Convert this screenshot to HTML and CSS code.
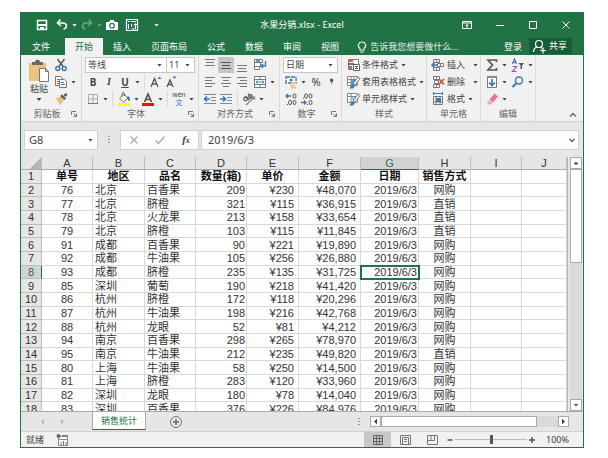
FILE: index.html
```
<!DOCTYPE html>
<html lang="zh-CN">
<head>
  <meta charset="UTF-8" />
  <meta name="viewport" content="width=device-width, initial-scale=1" />
  <title>水果分销.xlsx - Excel</title>
  <link rel="stylesheet" href="styles.css">
</head>

<body>
  <div class="window">
    <!-- TITLE BAR -->
    <header class="titlebar">
      <div class="quick">
        <button class="tool" aria-label="保存"><svg viewBox="0 0 16 16"><path fill="none" stroke="#fff" stroke-width="1.5" d="M3.5 3.5h9v9h-9z"/><path fill="#fff" d="M4 7h8v2H4zM6 10h4v3H6z"/></svg></button>
        <button class="tool drop" aria-label="撤消"><svg viewBox="0 0 16 16"><path fill="none" stroke="#fff" stroke-width="1.6" d="M6.500 2.500 3.500 6l3.500 3M4 6h5c4.500 0 4.500 5.500.5 6"/></svg></button>
        <button class="tool drop faded" aria-label="恢复"><svg viewBox="0 0 16 16"><path fill="none" stroke="#fff" stroke-width="1.4" d="M9.500 2.500 12.500 6 9 9M12 6H7c-4.500 0-4.500 5.500-.5 6"/></svg></button>
        <button class="tool" aria-label="照相机"><svg viewBox="0 0 16 16"><path fill="#fff" d="M2 5h3l1.500-2h3L11 5h3v8H2z"/><circle cx="8" cy="8.700" r="2.300" fill="none" stroke="#217346" stroke-width="1.200"/></svg></button>
        <button class="tool" aria-label="数据透视表"><svg viewBox="0 0 16 16"><path fill="none" stroke="#fff" stroke-width="1.200" d="M2.500 2.500h11v11h-11z"/><path stroke="#fff" fill="none" d="M4 4.500h2M7 4.500h5M4.500 7v5M7.500 12h4V7M7.500 7v3M9.500 8.500l2-2 2 2"/></svg></button>
        <button class="tool slim drop" aria-label="自定义快速访问工具栏"></button>
      </div>
      <h1 class="doc-name">水果分销.xlsx - Excel</h1>
      <div class="win-controls">
        <button aria-label="功能区显示选项"><svg viewBox="0 0 16 16"><path fill="none" stroke="#fff" d="M3.500 4.500h9v7h-9zM3.500 6h9M8 11V7.500M6.500 9 8 7.500 9.500 9"/></svg></button>
        <button aria-label="最小化"><svg viewBox="0 0 16 16"><path stroke="#fff" d="M4 8.500h8"/></svg></button>
        <button aria-label="最大化"><svg viewBox="0 0 16 16"><path fill="none" stroke="#fff" d="M4.500 4.500h7v7h-7z"/></svg></button>
        <button aria-label="关闭"><svg viewBox="0 0 16 16"><path stroke="#fff" d="m4.500 4.500 7 7M11.500 4.500l-7 7"/></svg></button>
      </div>
    </header>

    <!-- RIBBON TABS -->
    <nav class="tabs">
      <button class="tab file">文件</button>
      <button class="tab active">开始</button>
      <button class="tab">插入</button>
      <button class="tab">页面布局</button>
      <button class="tab">公式</button>
      <button class="tab">数据</button>
      <button class="tab">审阅</button>
      <button class="tab">视图</button>
      <button class="tell-me"><svg viewBox="0 0 16 16"><path fill="none" stroke="#e3efe8" stroke-width="1.200" d="M6 11V9.500C2.500 6.500 5 3 8 3s5.500 3.500 2 6.500V11zM6 13h4"/></svg>告诉我您想要做什么...</button>
      <button class="login">登录</button>
      <button class="share"><svg viewBox="0 0 16 16"><circle cx="8" cy="6" r="3.500" fill="none" stroke="#fff" stroke-width="1.200"/><path fill="none" stroke="#fff" stroke-width="1.200" d="M2.500 14c.2-3 1.500-4.500 3.500-5M10 9l1 1.500M9 12.500h6M12 9.500v6"/></svg>共享</button>
    </nav>

    <!-- RIBBON -->
    <div class="ribbon">
      <section class="group clipboard">
        <div class="clip-tools">
          <button class="paste">
            <svg viewBox="0 0 22 24"><path fill="#edc27c" d="M1 4h17v18H1z"/><path fill="#696969" d="M4 3h3c0-3 5-3 5 0h3v3H4z"/><path fill="#fff" stroke="#777" d="M11.500 9.500h6l3 3v10h-9z"/><path fill="none" stroke="#777" d="M17.500 9.500v3h3"/></svg>
            <span>粘贴</span>
            <i class="caret"></i>
          </button>
          <div class="rows">
            <div class="row"><button class="tool" aria-label="剪切"><svg viewBox="0 0 16 16"><path stroke="#555" stroke-width="1.400" d="m4.500 2 6 8M11.500 2l-6 8"/><g fill="none" stroke="#3a76b8" stroke-width="1.400"><circle cx="4.800" cy="11.500" r="2"/><circle cx="11.200" cy="11.500" r="2"/></g></svg></button></div>
            <div class="row"><button class="tool drop" aria-label="复制"><svg viewBox="0 0 16 16"><path fill="#fff" stroke="#777" d="M2.500 2.500h5l2 2v7h-7z"/><path fill="#fff" stroke="#777" d="M6.500 5.500h5l2 2v6h-7z"/><path stroke="#3a76b8" d="M4 5.500h2M4 7.500h2M8 8.500h3M8 10.500h4M4 9.500h2"/></svg></button></div>
            <div class="row"><button class="tool" aria-label="格式刷"><svg viewBox="0 0 16 16"><path fill="#edbd72" d="m3 7 5-1 3 3-4 5z"/><path fill="#555" d="m7 5 2-1.500 4 4L11.500 9zM10.500 4l2.500-2 1.500 1.500-2 2.500z"/></svg></button></div>
          </div>
        </div>
        <footer><span>剪贴板</span><svg class="launch" viewBox="0 0 8 8"><path fill="none" stroke="#777" d="M1.500 5V1.500H6M3.500 3.500l3 3M6.500 3.500v3h-3"/></svg></footer>
      </section>

      <section class="group font">
        <div class="rows">
          <div class="row">
            <label class="pick wide"><select aria-label="字体"><option>等线</option></select></label>
            <label class="pick small"><select aria-label="字号"><option>11</option></select></label>
          </div>
          <div class="row">
            <button class="tool letter"><b>B</b></button>
            <button class="tool letter"><i class="ital">I</i></button>
            <button class="tool letter drop"><u>U</u></button>
            <span class="sep"></span>
            <button class="tool" aria-label="增大字号"><svg viewBox="0 0 16 16"><path fill="none" stroke="#555" stroke-width="1.300" d="M3 13 6.500 4.500 10 13M4.500 10h4"/><path fill="#3a76b8" d="m9.500 5 2-2.500 2 2.500z"/></svg></button>
            <button class="tool" aria-label="减小字号"><svg viewBox="0 0 16 16"><path fill="none" stroke="#555" stroke-width="1.300" d="M3 13 6 6l3 7M4.500 10.500h3"/><path fill="#3a76b8" d="m8.500 2.500 2 2.500 2-2.500z"/></svg></button>
          </div>
          <div class="row">
            <button class="tool drop" aria-label="边框"><svg viewBox="0 0 16 16"><path fill="none" stroke="#aaa" d="M3.500 3.500h9v9h-9zM8 4v8M4 8h8"/><path stroke="#777" d="M3 12.500h10"/></svg></button>
            <span class="sep"></span>
            <button class="tool drop" aria-label="填充颜色"><svg viewBox="0 0 16 16"><path fill="#fff" stroke="#666" d="M3.500 7.500 8 3l4 4-4.500 4z"/><path fill="none" stroke="#666" d="M6 5.500V2.500c0-1.500 2.500-1.500 2.500 0V5"/><path fill="#3a76b8" d="M12 5c2 1 2.500 3 1.500 5C12 10 12 8 11 7z"/><path fill="#ff0" d="M2 12h12v3H2z"/></svg></button>
            <button class="tool drop" aria-label="字体颜色"><svg viewBox="0 0 16 16"><path fill="none" stroke="#555" stroke-width="1.700" d="m4.500 11 3.500-8 3.500 8M6 8.500h4"/><path fill="#e81010" d="M2 12h12v3H2z"/></svg></button>
            <span class="sep"></span>
            <button class="tool drop pinyin" aria-label="拼音"><span><small>wén</small><em>文</em></span></button>
          </div>
        </div>
        <footer><span>字体</span><svg class="launch" viewBox="0 0 8 8"><path fill="none" stroke="#777" d="M1.500 5V1.500H6M3.500 3.500l3 3M6.500 3.500v3h-3"/></svg></footer>
      </section>

      <section class="group align">
        <div class="rows">
          <div class="row">
            <button class="tool" aria-label="顶端对齐"><svg viewBox="0 0 16 16"><path stroke="#777" d="M3 2.500h10M4 5.500h8M3 8.500h10"/></svg></button>
            <button class="tool on" aria-label="垂直居中"><svg viewBox="0 0 16 16"><path stroke="#555" d="M3 5.500h10M4 8.500h8M3 11.500h10"/></svg></button>
            <button class="tool" aria-label="底端对齐"><svg viewBox="0 0 16 16"><path stroke="#777" d="M3 8.500h10M4 11.500h8M3 14.500h10"/></svg></button>
            <button class="tool gap" aria-label="自动换行"><svg viewBox="0 0 16 16"><path fill="#fff" stroke="#777" d="M2.500 2.500h8v3h-8zM2.500 5.500h6v4h-6zM2.500 9.500h5v3h-5z"/><path fill="none" stroke="#3a76b8" stroke-width="1.300" d="M4 4h4M13.500 4v5H9M11 7 9 9l2 2"/></svg></button>
          </div>
          <div class="row">
            <button class="tool" aria-label="左对齐"><svg viewBox="0 0 16 16"><path stroke="#777" d="M3 3.500h10M3 6.500h7M3 9.500h10M3 12.500h7"/></svg></button>
            <button class="tool" aria-label="居中"><svg viewBox="0 0 16 16"><path stroke="#777" d="M3 3.500h10M5 6.500h6M3 9.500h10M5 12.500h6"/></svg></button>
            <button class="tool" aria-label="右对齐"><svg viewBox="0 0 16 16"><path stroke="#777" d="M3 3.500h10M6 6.500h7M3 9.500h10M6 12.500h7"/></svg></button>
            <button class="tool gap drop" aria-label="合并后居中"><svg viewBox="0 0 16 16"><path fill="#fff" stroke="#777" d="M2.500 2.500h11v11h-11zM2.500 5.500h11M2.500 10.500h11M8 2.500v3M8 10.500v3"/><path fill="none" stroke="#3a76b8" d="M4 8h8M5.500 6.500 4 8l1.500 1.500M10.500 6.500 12 8l-1.500 1.500"/></svg></button>
          </div>
          <div class="row">
            <button class="tool" aria-label="减少缩进"><svg viewBox="0 0 16 16"><path stroke="#888" d="M2 3.500h12M9 6.500h5M9 9.500h5M2 12.500h12"/><path fill="none" stroke="#3a76b8" stroke-width="1.600" d="M2.500 8H8M5 5.500 2.500 8 5 10.500"/></svg></button>
            <button class="tool" aria-label="增加缩进"><svg viewBox="0 0 16 16"><path stroke="#888" d="M2 3.500h12M9 6.500h5M9 9.500h5M2 12.500h12"/><path fill="none" stroke="#3a76b8" stroke-width="1.600" d="M2 8h5.500M5 5.500 7.500 8 5 10.500"/></svg></button>
            <span class="sep"></span>
            <button class="tool drop" aria-label="方向"><svg viewBox="0 0 16 16"><g fill="none" stroke="#555" stroke-width="1.200"><circle cx="4.500" cy="8" r="1.800"/><path d="m4.500 5 3.500 4M7 2.500l4 5"/><circle cx="9.500" cy="5.500" r="1.800"/><path stroke="#888" d="m5 14 8.500-8M13.500 9V6h-3"/></g></svg></button>
          </div>
        </div>
        <footer><span>对齐方式</span><svg class="launch" viewBox="0 0 8 8"><path fill="none" stroke="#777" d="M1.500 5V1.500H6M3.500 3.500l3 3M6.500 3.500v3h-3"/></svg></footer>
      </section>

      <section class="group number">
        <div class="rows">
          <div class="row"><label class="pick"><select aria-label="数字格式"><option>日期</option></select></label></div>
          <div class="row">
            <button class="tool drop" aria-label="会计数字格式"><svg viewBox="0 0 16 16"><path fill="#fff" stroke="#3a76b8" stroke-width="1.400" stroke-dasharray="4 1" d="M3 3h10v6H3z"/><circle cx="8" cy="6" r="1.500" fill="#3a76b8"/><path fill="#edbd72" d="M8 8h5v2H8zM7 11h5v1.500H7zM8 13h5v1.500H8z"/></svg></button>
            <button class="tool percent">%</button>
            <button class="tool" aria-label="千位分隔"><svg viewBox="0 0 16 16"><path fill="#555" d="M6 5c2-1.500 4 0 3 2.500L7 11c.2-1.500.5-2 .5-3C6 8 5.500 6 6 5z"/></svg></button>
          </div>
          <div class="row">
            <button class="tool" aria-label="增加小数位数"><svg viewBox="0 0 16 16"><path fill="none" stroke="#3a76b8" stroke-width="1.300" d="M3 5h5M5 3 3 5l2 2"/><g fill="none" stroke="#555"><ellipse cx="11.500" cy="5" rx="1.500" ry="2.200"/><ellipse cx="7" cy="11.500" rx="1.500" ry="2.200"/><ellipse cx="11.500" cy="11.500" rx="1.500" ry="2.200"/><path d="M4 13.500h1"/></g></svg></button>
            <button class="tool" aria-label="减少小数位数"><svg viewBox="0 0 16 16"><path fill="none" stroke="#3a76b8" stroke-width="1.300" d="M2 11.500h5M5 9.500l2 2-2 2"/><g fill="none" stroke="#555"><ellipse cx="7" cy="5" rx="1.500" ry="2.200"/><ellipse cx="11.500" cy="5" rx="1.500" ry="2.200"/><ellipse cx="11.500" cy="11.500" rx="1.500" ry="2.200"/><path d="M4 7h1M8 13.500h1"/></g></svg></button>
          </div>
        </div>
        <footer><span>数字</span><svg class="launch" viewBox="0 0 8 8"><path fill="none" stroke="#777" d="M1.500 5V1.500H6M3.500 3.500l3 3M6.500 3.500v3h-3"/></svg></footer>
      </section>

      <section class="group styles">
        <div class="rows">
          <div class="row"><button class="text-tool"><svg viewBox="0 0 16 16"><path fill="#fff" stroke="#777" d="M3.500 2.500h10v10h-10z"/><path fill="#d9604c" d="M3 2h5v3H3zM3 9h4v3H3z"/><path fill="#3a76b8" d="M3 6h6v2H3z"/><path fill="#fff" stroke="#666" d="M8.500 7.500h6v6h-6zM10 12l3-3M10 9.500h3M10 11.500h3"/></svg>条件格式<i class="caret"></i></button></div>
          <div class="row"><button class="text-tool"><svg viewBox="0 0 16 16"><path fill="#fff" stroke="#888" d="M2.500 2.500h10v9h-10zM2.500 5.500h10M2.500 8.500h10M6 2.500v9M9 2.500v9"/><path fill="#5b9bd5" d="M6 6h6v5H6z"/><path fill="#fff" stroke="#777" d="m8 10 5-7 2 1.500-5 6.500z"/><path fill="#3a76b8" d="m7 10 3 2-2 2.500H4.500z"/></svg>套用表格格式<i class="caret"></i></button></div>
          <div class="row"><button class="text-tool"><svg viewBox="0 0 16 16"><path fill="#fff" stroke="#888" d="M2.500 2.500h10v9h-10zM2.500 5.500h10M6 2.500v9"/><path fill="#9cc3e6" d="M6 6h6v3H6z"/><path fill="#fff" stroke="#777" d="m8 10 5-7 2 1.500-5 6.500z"/><path fill="#3a76b8" d="m7 10 3 2-2 2.500H4.500z"/></svg>单元格样式<i class="caret"></i></button></div>
        </div>
        <footer><span>样式</span></footer>
      </section>

      <section class="group cells">
        <div class="rows">
          <div class="row"><button class="text-tool spread"><svg viewBox="0 0 16 16"><path fill="#fff" stroke="#777" d="M3.500 2.500h6v3h-6zM3.500 10.500h6v3h-6zM6.500 2.500v3M6.500 10.500v3M7.500 6.500h6v3h-6zM10.500 6.500v3"/><path fill="none" stroke="#3a76b8" stroke-width="1.600" d="M2 8h6M4.500 5.500 2 8l2.500 2.500"/></svg>插入<i class="caret"></i></button></div>
          <div class="row"><button class="text-tool spread"><svg viewBox="0 0 16 16"><path fill="#fff" stroke="#777" d="M3.500 2.500h6v3h-6zM3.500 10.500h6v3h-6zM6.500 2.500v3M6.500 10.500v3M4.500 6.500h4v3h-4z"/><path stroke="#d9482b" stroke-width="1.600" d="m9 5 5 5.500M14 5l-5 5.500"/></svg>删除<i class="caret"></i></button></div>
          <div class="row"><button class="text-tool"><svg viewBox="0 0 16 16"><path fill="none" stroke="#3a76b8" d="M3 2.500h10M3.500 1v3M12.500 1v3"/><path fill="#fff" stroke="#777" d="M3.500 5.500h9v8h-9zM3.500 11h9M6 5.500v8M10 5.500v8"/><path fill="#3a76b8" d="M6 7h5v4H6z"/></svg>格式<i class="caret"></i></button></div>
        </div>
        <footer><span>单元格</span></footer>
      </section>

      <section class="group editing">
        <div class="rows">
          <div class="row">
            <button class="tool drop" aria-label="求和"><svg viewBox="0 0 16 16"><path fill="none" stroke="#555" stroke-width="1.700" d="M12.500 5V3H4l4.500 5L4 13h8.500v-2"/></svg></button>
            <button class="tool drop" aria-label="排序和筛选"><svg viewBox="0 0 16 16"><path fill="none" stroke="#3a76b8" stroke-width="1.200" d="m2.500 7 2-5 2 5M3 5.500h3"/><path fill="none" stroke="#9a4fb5" stroke-width="1.200" d="M2.500 9.500h4l-4 5h4"/><path fill="#555" d="M8.500 6H14l-2 2.500V12h-1.500V8.500z"/></svg></button>
          </div>
          <div class="row">
            <button class="tool drop" aria-label="填充"><svg viewBox="0 0 16 16"><path fill="#fff" stroke="#777" d="M3.500 2.500h9v11h-9z"/><path fill="#888" d="M3 2h10v2H3z"/><path fill="none" stroke="#3a76b8" stroke-width="1.700" d="M8 5v6.500M5 8.500l3 3 3-3"/></svg></button>
            <button class="tool drop" aria-label="查找和选择"><svg viewBox="0 0 16 16"><circle cx="9" cy="6.500" r="3.500" fill="none" stroke="#3a76b8" stroke-width="1.400"/><path stroke="#3a76b8" stroke-width="2" d="m6.500 9-4 4"/></svg></button>
          </div>
          <div class="row">
            <button class="tool drop" aria-label="清除"><svg viewBox="0 0 16 16"><path fill="#e8798c" d="m5.500 8.500 5-6 3.500 3-5 6z"/><path fill="#f1a9b5" d="m5 9 3.500 3L7 13.500H4.500L3 12z"/></svg></button>
          </div>
        </div>
        <footer><span>编辑</span></footer>
      </section>
      <button class="collapse" aria-label="折叠功能区"><svg viewBox="0 0 8 8"><path fill="none" stroke="#666" stroke-width="1.300" d="m1 5.500 3-3 3 3"/></svg></button>
    </div>

    <!-- FORMULA BAR -->
    <div class="formula-bar">
      <label class="name-box"><input type="text" value="G8" aria-label="名称框"><i class="caret"></i></label>
      <svg class="dots" viewBox="0 0 4 12"><path stroke="#999" stroke-width="2" stroke-dasharray="1 2" d="M2 2v8"/></svg>
      <div class="formula-buttons">
        <button class="tool" aria-label="取消"><svg viewBox="0 0 16 16"><path stroke="#aaa" stroke-width="1.200" d="m4.500 4.500 7 7M11.500 4.500l-7 7"/></svg></button>
        <button class="tool" aria-label="输入"><svg viewBox="0 0 16 16"><path fill="none" stroke="#aaa" stroke-width="1.400" d="m3.500 8.500 3 3 6-7"/></svg></button>
        <button class="tool fx"><i>f<sub>x</sub></i></button>
      </div>
      <label class="formula"><input type="text" value="2019/6/3" aria-label="编辑栏"><svg viewBox="0 0 8 8"><path fill="none" stroke="#666" stroke-width="1.500" d="m1.500 3 2.500 2.500L6.500 3"/></svg></label>
    </div>

    <!-- SHEET -->
    <div class="sheet">
      <div class="grid">
        <table>
          <colgroup><col class="c-num"><col class="c-a"><col class="c-b"><col class="c-a"><col class="c-a"><col class="c-b"><col class="c-f"><col class="c-g"><col class="c-b"><col class="c-a"><col></colgroup>
          <thead>
            <tr><th class="corner"></th><th>A</th><th>B</th><th>C</th><th>D</th><th>E</th><th>F</th><th class="current">G</th><th>H</th><th>I</th><th>J</th></tr>
          </thead>
          <tbody>
            <tr class="titles"><th>1</th><td>单号</td><td>地区</td><td>品名</td><td>数量(箱)</td><td>单价</td><td>金额</td><td>日期</td><td>销售方式</td><td></td><td></td></tr>
            <tr><th>2</th><td>76</td><td>北京</td><td>百香果</td><td>209</td><td>¥230</td><td>¥48,070</td><td>2019/6/3</td><td>网购</td><td></td><td></td></tr>
            <tr><th>3</th><td>77</td><td>北京</td><td>脐橙</td><td>321</td><td>¥115</td><td>¥36,915</td><td>2019/6/3</td><td>直销</td><td></td><td></td></tr>
            <tr><th>4</th><td>78</td><td>北京</td><td>火龙果</td><td>213</td><td>¥158</td><td>¥33,654</td><td>2019/6/3</td><td>直销</td><td></td><td></td></tr>
            <tr><th>5</th><td>79</td><td>北京</td><td>脐橙</td><td>103</td><td>¥115</td><td>¥11,845</td><td>2019/6/3</td><td>直销</td><td></td><td></td></tr>
            <tr><th>6</th><td>91</td><td>成都</td><td>百香果</td><td>90</td><td>¥221</td><td>¥19,890</td><td>2019/6/3</td><td>网购</td><td></td><td></td></tr>
            <tr><th>7</th><td>92</td><td>成都</td><td>牛油果</td><td>105</td><td>¥256</td><td>¥26,880</td><td>2019/6/3</td><td>网购</td><td></td><td></td></tr>
            <tr><th class="current">8</th><td>93</td><td>成都</td><td>脐橙</td><td>235</td><td>¥135</td><td>¥31,725</td><td class="selected">2019/6/3</td><td>网购</td><td></td><td></td></tr>
            <tr><th>9</th><td>85</td><td>深圳</td><td>葡萄</td><td>190</td><td>¥218</td><td>¥41,420</td><td>2019/6/3</td><td>网购</td><td></td><td></td></tr>
            <tr><th>10</th><td>86</td><td>杭州</td><td>脐橙</td><td>172</td><td>¥118</td><td>¥20,296</td><td>2019/6/3</td><td>网购</td><td></td><td></td></tr>
            <tr><th>11</th><td>87</td><td>杭州</td><td>牛油果</td><td>198</td><td>¥216</td><td>¥42,768</td><td>2019/6/3</td><td>网购</td><td></td><td></td></tr>
            <tr><th>12</th><td>88</td><td>杭州</td><td>龙眼</td><td>52</td><td>¥81</td><td>¥4,212</td><td>2019/6/3</td><td>网购</td><td></td><td></td></tr>
            <tr><th>13</th><td>94</td><td>南京</td><td>百香果</td><td>298</td><td>¥265</td><td>¥78,970</td><td>2019/6/3</td><td>网购</td><td></td><td></td></tr>
            <tr><th>14</th><td>95</td><td>南京</td><td>牛油果</td><td>212</td><td>¥235</td><td>¥49,820</td><td>2019/6/3</td><td>直销</td><td></td><td></td></tr>
            <tr><th>15</th><td>80</td><td>上海</td><td>牛油果</td><td>58</td><td>¥250</td><td>¥14,500</td><td>2019/6/3</td><td>网购</td><td></td><td></td></tr>
            <tr><th>16</th><td>81</td><td>上海</td><td>脐橙</td><td>283</td><td>¥120</td><td>¥33,960</td><td>2019/6/3</td><td>网购</td><td></td><td></td></tr>
            <tr><th>17</th><td>82</td><td>深圳</td><td>龙眼</td><td>180</td><td>¥78</td><td>¥14,040</td><td>2019/6/3</td><td>网购</td><td></td><td></td></tr>
            <tr><th>18</th><td>83</td><td>深圳</td><td>百香果</td><td>376</td><td>¥226</td><td>¥84,976</td><td>2019/6/3</td><td>网购</td><td></td><td></td></tr>
          </tbody>
        </table>
      </div>
      <div class="vscroll">
        <button aria-label="向上滚动"><i class="caret up"></i></button>
        <div class="track"><div class="thumb"></div></div>
        <button aria-label="向下滚动"><i class="caret"></i></button>
      </div>
    </div>

    <!-- SHEET TABS -->
    <div class="sheet-tabs">
      <div class="sheet-nav"><i class="caret left"></i><i class="caret right"></i></div>
      <button class="sheet-tab">销售统计</button>
      <button class="add" aria-label="新工作表"><svg viewBox="0 0 14 14"><circle cx="7" cy="7" r="5.500" fill="none" stroke="#777"/><path stroke="#666" stroke-width="1.400" d="M4 7h6M7 4v6"/></svg></button>
      <svg class="dots" viewBox="0 0 4 12"><path stroke="#999" stroke-width="2" stroke-dasharray="1 2" d="M2 2v8"/></svg>
      <div class="hscroll">
        <button aria-label="向左滚动"><i class="caret left"></i></button>
        <div class="track"><div class="thumb"></div></div>
        <button aria-label="向右滚动"><i class="caret right"></i></button>
      </div>
    </div>

    <!-- STATUS BAR -->
    <footer class="status">
      <span>就绪</span>
      <svg class="macro" viewBox="0 0 16 16"><path fill="#fff" stroke="#888" d="M4.500 4.500h9v9h-9zM4.500 7.500h9"/><path stroke="#777" d="M7 13v-3M9.500 13V9M12 13v-3M8 3.500h6"/><circle cx="4.500" cy="4" r="2" fill="#666"/></svg>
      <div class="views">
        <button class="on" aria-label="普通"><svg viewBox="0 0 16 16"><path fill="none" stroke="#666" d="M3.500 3.500h9v9h-9zM6.500 3.500v9M9.500 3.500v9M3.500 6.500h9M3.500 9.500h9"/></svg></button>
        <button aria-label="页面布局"><svg viewBox="0 0 16 16"><path fill="none" stroke="#777" d="M3.500 3.500h10v9h-10zM5.500 5.500h6v7h-6zM7 7.500h3M7 9.500h3"/></svg></button>
        <button aria-label="分页预览"><svg viewBox="0 0 16 16"><path fill="none" stroke="#777" d="M3.500 3.500h10v9h-10zM7 3.500v5M10.500 3.500v5h-7"/></svg></button>
      </div>
      <button class="zoom-step" aria-label="缩小"><svg viewBox="0 0 8 8"><path stroke="#555" stroke-width="1.500" d="M1.500 4h5"/></svg></button>
      <input class="zoom" type="range" min="0" max="100" value="50" aria-label="显示比例">
      <button class="zoom-step" aria-label="放大"><svg viewBox="0 0 8 8"><path stroke="#555" stroke-width="1.500" d="M1 4h6M4 1v6"/></svg></button>
      <span class="zoom-value">100%</span>
    </footer>
  </div>
</body>
</html>
```
FILE: styles.css
```
/* Reset margin/padding */
* {
  margin: 0;
  padding: 0;
  box-sizing: border-box;
}

body {
  display: flex;
  height: 100vh;
  padding: 12px 24px 10px 20px;
  background: #fff;
  color: #444;
  font-family: 'Noto Sans', 'Noto Sans CJK SC', sans-serif;
  font-size: 9px;
  line-height: 12px;
}

button,
input,
select {
  border: 0;
  background: none;
  color: inherit;
  font: inherit;
  outline: none;
}

button {
  display: flex;
  align-items: center;
  justify-content: center;
  white-space: nowrap;
}

svg {
  display: block;
  flex: none;
  width: 16px;
  height: 16px;
}

.window {
  flex: 1;
  min-width: 0;
  display: flex;
  flex-direction: column;
  border: 1px solid #217346;
  border-top: 0;
  background: #e6e6e6;
}

/* small drop-down triangle, shared by every menu button */
.caret,
.drop::after,
.pick::after {
  content: '';
  flex: none;
  width: 5px;
  height: 3px;
  background: currentColor;
  clip-path: polygon(0 0, 100% 0, 50% 100%);
}

.caret.up {
  clip-path: polygon(50% 0, 100% 100%, 0 100%);
}

.caret.left {
  width: 3px;
  height: 6px;
  clip-path: polygon(100% 0, 100% 100%, 0 50%);
}

.caret.right {
  width: 3px;
  height: 6px;
  clip-path: polygon(0 0, 100% 50%, 0 100%);
}

.tool {
  flex: none;
  width: 16px;
  height: 16px;
}

.tool.drop {
  width: 24px;
  justify-content: flex-start;
  gap: 2px;
}

.tool.on {
  background: #c5c5c5;
}

/* TITLE BAR */
.titlebar {
  display: grid;
  grid-template-columns: 1fr auto 1fr;
  align-items: center;
  height: 26px;
  background: #217346;
  color: #fff;
}

.quick {
  display: flex;
  gap: 4px;
  padding-left: 13px;
}

.quick .drop {
  margin-right: -3px;
}

.quick .slim {
  width: 8px;
  margin-left: 10px;
}

.faded {
  opacity: 0.35;
}

.doc-name {
  font-size: 9px;
  font-weight: 400;
}

.win-controls {
  display: flex;
  justify-content: flex-end;
  gap: 17px;
  padding-right: 9px;
}

/* RIBBON TABS */
.tabs {
  display: flex;
  align-items: stretch;
  height: 17px;
  padding-right: 11px;
  background: #217346;
  color: #fff;
}

.tab {
  padding: 0 10px;
}

.tab.file {
  padding: 0 14px 0 11px;
  margin-right: 1px;
}

.tab.active {
  background: #f1f1f1;
  color: #217346;
}

.tell-me {
  margin-left: 5px;
  color: #e3efe8;
}

.login {
  margin-left: auto;
  padding-right: 7px;
}

.share {
  gap: 2px;
  height: 16px;
  padding: 0 5px 0 2px;
  background: #185c37;
}

/* RIBBON */
.ribbon {
  display: flex;
  height: 67px;
  border-bottom: 1px solid #d0d0d0;
  background: #f1f1f1;
}

.group {
  flex: none;
  display: flex;
  flex-direction: column;
  justify-content: space-between;
  padding: 2px 3px 0;
  border-right: 1px solid #dadada;
}

.group footer {
  display: flex;
  align-items: center;
  height: 14px;
  color: #666;
}

.group footer span {
  flex: 1;
  text-align: center;
}

.launch {
  width: 8px;
  height: 8px;
}

.clipboard { width: 61px; }
.font { width: 117px; }
.align { width: 81px; }
.number { width: 62px; }
.styles { width: 85px; }
.cells { width: 54px; }
.editing { width: 55px; }

.rows {
  display: flex;
  flex-direction: column;
  gap: 1px;
}

.row {
  display: flex;
  align-items: center;
  height: 16px;
}

.sep {
  flex: none;
  width: 1px;
  height: 16px;
  margin: 0 3px;
  background: #dadada;
}

.clip-tools {
  display: flex;
  gap: 3px;
}

.paste {
  flex-direction: column;
  justify-content: flex-start;
  width: 26px;
  padding: 2px 0 0 4px;
}

.paste svg {
  width: 22px;
  height: 24px;
}

.paste .caret {
  margin-top: 3px;
}

.pick {
  flex: 1;
  display: flex;
  align-items: center;
  height: 16px;
  padding-right: 4px;
  border: 1px solid #c6c6c6;
  background: #fff;
}

.pick.small {
  flex: none;
  width: 29px;
  margin-left: -1px;
}

.pick select {
  flex: 1;
  min-width: 0;
  padding-left: 2px;
  appearance: none;
}

.letter b,
.letter i,
.letter u {
  width: 16px;
  font-size: 10px;
  font-weight: 700;
  text-align: center;
}

.letter .ital {
  font-family: 'Liberation Serif', serif;
}

.pinyin span {
  width: 16px;
}

.pinyin small,
.pinyin em {
  display: block;
  font-family: 'Liberation Sans', 'Noto Sans CJK SC', sans-serif;
  font-size: 7px;
  font-style: normal;
  line-height: 8px;
}

.pinyin em {
  color: #3a76b8;
}

.tool.gap {
  margin-left: 2px;
}

.percent {
  font-size: 11px;
}

.number .drop,
.align .drop {
  margin-right: 1px;
}

.text-tool svg {
  margin-right: 1px;
}

.text-tool .caret {
  margin-left: 3px;
}

.text-tool.spread .caret {
  margin-left: 8px;
}

.editing .row {
  gap: 2px;
}

.collapse {
  align-self: flex-end;
  margin: 0 6px 2px auto;
}

.collapse svg {
  width: 8px;
  height: 8px;
}

/* FORMULA BAR */
.formula-bar {
  display: flex;
  align-items: stretch;
  height: 35px;
  padding: 8px 4px 7px 3px;
  font-size: 11px;
}

.name-box,
.formula,
.formula-buttons {
  display: flex;
  align-items: center;
  border: 1px solid #d0d0d0;
  background: #fdfdfd;
}

.name-box {
  width: 74px;
  padding: 0 4px;
}

.name-box input,
.formula input {
  flex: 1;
  min-width: 0;
}

.dots {
  width: 4px;
  height: 12px;
  align-self: center;
}

.formula-bar .dots {
  margin: 0 9px;
}

.formula-buttons {
  gap: 10px;
  width: 79px;
  padding-left: 5px;
}

.fx {
  font-family: 'Liberation Serif', serif;
  font-weight: 700;
}

.fx sub {
  font-size: 8px;
  vertical-align: baseline;
}

.formula {
  flex: 1;
  margin-left: 2px;
  padding: 0 2px 0 6px;
}

.formula svg {
  width: 8px;
  height: 8px;
}

/* SHEET */
.sheet {
  flex: 1;
  display: flex;
  gap: 2px;
  min-height: 0;
  padding-right: 1px;
}

.grid {
  flex: 1;
  min-width: 0;
  overflow: hidden;
  border-right: 1px solid #b5b5b5;
  background: #fff;
}

/* last row runs a little under the sheet tabs */
table {
  width: 100%;
  height: calc(100% + 5px);
  table-layout: fixed;
  border-collapse: separate;
  border-spacing: 0;
  color: #333;
  font-family: 'Liberation Sans', 'Noto Sans CJK SC', sans-serif;
  font-size: 11px;
  line-height: 12px;
}

.c-num { width: 21px; }
.c-a { width: 51px; }
.c-b { width: 52px; }
.c-f { width: 62px; }
.c-g { width: 58px; }

td,
th {
  border-right: 1px solid #d9d9d9;
  border-bottom: 1px solid #d9d9d9;
  text-align: center;
  white-space: nowrap;
}

th {
  border-color: #bdbdbd;
  background: #e6e6e6;
  font-weight: 400;
}

thead th {
  height: 13px;
  border-bottom-color: #ababab;
}

th.current {
  background: #d2d2d2;
  color: #217346;
}

thead th.current {
  border-bottom: 1px solid #217346;
}

tbody th.current {
  border-right-color: #217346;
}

.corner {
  background: linear-gradient(135deg, #e6e6e6 65%, #b5b5b5 65%);
}

td:nth-child(3),
td:nth-child(4) {
  padding-left: 2px;
  text-align: left;
}

td:nth-child(5),
td:nth-child(6),
td:nth-child(7),
td:nth-child(8) {
  padding-right: 1px;
  text-align: right;
}

td:nth-child(6),
td:nth-child(7) {
  padding-right: 4px;
}

.titles td:nth-child(n) {
  padding: 0;
  color: #111;
  font-weight: 700;
  text-align: center;
}

td.selected {
  outline: 2px solid #217346;
  outline-offset: -1px;
}

/* scrollbars */
.vscroll {
  display: flex;
  flex-direction: column;
  width: 12px;
}

.vscroll button,
.hscroll button,
.thumb {
  flex: none;
  border: 1px solid #ababab;
  background: #fff;
}

.vscroll button {
  height: 12px;
}

.track {
  flex: 1;
  background: #dadada;
}

.vscroll .thumb {
  height: 41%;
}

/* SHEET TABS */
.sheet-tabs {
  display: flex;
  align-items: center;
  height: 20px;
  border-top: 1px solid #ababab;
}

.sheet-nav {
  display: flex;
  justify-content: flex-end;
  gap: 17px;
  width: 71px;
  padding-right: 28px;
  color: #bbb;
}

.sheet-tab {
  align-self: flex-start;
  height: 18px;
  padding: 0 8px;
  border: 1px solid #ababab;
  border-top: 0;
  border-bottom: 1px solid #217346;
  background: #fff;
  color: #217346;
}

.add {
  margin-left: 23px;
}

.add svg {
  width: 14px;
  height: 14px;
}

.sheet-tabs .dots {
  margin-left: auto;
}

.hscroll {
  display: flex;
  width: 199px;
  height: 11px;
  margin: 0 14px 0 9px;
}

.hscroll button {
  width: 11px;
}

.hscroll .thumb {
  width: 88%;
  height: 100%;
}

/* STATUS BAR */
.status {
  display: flex;
  align-items: center;
  height: 16px;
  padding: 0 14px 0 5px;
  border-top: 1px solid #d0d0d0;
  background: #f1f1f1;
}

.macro {
  margin-left: 10px;
}

.views {
  display: flex;
  margin-left: auto;
}

.views button {
  width: 27px;
  height: 15px;
}

.views .on {
  background: #c8c8c8;
}

.zoom-step {
  width: 10px;
}

.zoom-step svg {
  width: 8px;
  height: 8px;
}

.zoom {
  width: 72px;
  height: 9px;
  appearance: none;
  background: linear-gradient(#bbb, #bbb) center / 100% 1px no-repeat;
}

.zoom::-webkit-slider-thumb {
  appearance: none;
  width: 3px;
  height: 9px;
  background: #555;
}

.zoom-value {
  margin-left: 9px;
}
```
